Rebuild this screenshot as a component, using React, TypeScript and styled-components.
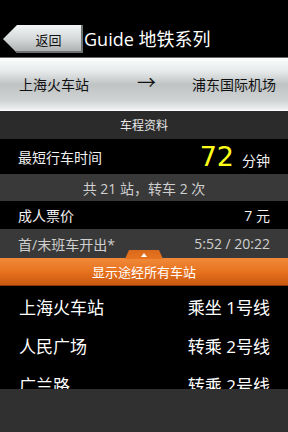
import styled, { createGlobalStyle } from "styled-components";

const GlobalStyle = createGlobalStyle`
  html, body {
    margin: 0;
    padding: 0;
    background: #000;
  }
  * {
    box-sizing: border-box;
  }
`;

const FONT = `"Open Sans", "Noto Sans CJK SC", sans-serif`;

const Screen = styled.div`
  width: 288px;
  height: 432px;
  background: #000;
  display: flex;
  flex-direction: column;
  overflow: hidden;
  font-family: ${FONT};
  color: #f2f2f2;
`;

const Header = styled.div`
  height: 58px;
  display: flex;
  align-items: flex-end;
  padding: 0 0 4px 3px;
  gap: 1px;
  border-bottom: 1px solid #6a6a6a;
`;

const BackButton = styled.button`
  width: 80px;
  height: 28px;
  border: none;
  padding: 0 0 0 11px;
  font-family: ${FONT};
  font-size: 13px;
  color: #111;
  background: linear-gradient(to bottom, #f4f6f6 0%, #d4d8d8 50%, #a8acac 100%);
  clip-path: polygon(0 50%, 14px 0, 100% 0, 100% 100%, 14px 100%);
  box-shadow: inset -2px -2px 0 #6e7272;
  display: flex;
  align-items: center;
  justify-content: center;
`;

const Title = styled.div`
  font-size: 18px;
  line-height: 28px;
  color: #fff;
`;

const RouteBar = styled.div`
  height: 53px;
  display: flex;
  align-items: center;
  justify-content: space-between;
  padding: 0 12px 2px 19px;
  background: linear-gradient(
    to bottom,
    #fbfdfd 0%,
    #e6eaea 25%,
    #bfc3c3 50%,
    #cfd3d3 80%,
    #eceeee 96%,
    #ffffff 100%
  );
  color: #111;
  font-size: 14px;
`;

const Arrow = styled.span`
  font-size: 19px;
  line-height: 1;
  margin-left: 12px;
`;

const SectionTitle = styled.div`
  height: 28px;
  background: #2b2b2b;
  display: flex;
  align-items: center;
  justify-content: center;
  font-size: 12px;
  color: #e8e8e8;
`;

const InfoRow = styled.div<{ $shade?: boolean; $h: number; $center?: boolean }>`
  height: ${(p) => p.$h}px;
  background: ${(p) => (p.$shade ? "#393939" : "#000")};
  color: ${(p) => (p.$shade ? "#cfcfcf" : "#f2f2f2")};
  display: flex;
  align-items: center;
  justify-content: ${(p) => (p.$center ? "center" : "space-between")};
  padding: 0 18px 0 18px;
  font-size: 14px;
`;

const Value = styled.span`
  display: flex;
  align-items: baseline;
  gap: 8px;
`;

const BigNumber = styled.span`
  font-size: 27px;
  line-height: 1;
  color: #ffff1a;
  font-family: "DejaVu Sans", ${FONT};
`;

const OrangeBar = styled.div`
  position: relative;
  height: 28px;
  background: linear-gradient(to bottom, #f08a3a 0%, #e8731f 50%, #c9580e 100%);
  display: flex;
  align-items: center;
  justify-content: center;
  font-size: 13px;
  color: #fff;
  border-bottom: 1px solid #8a3a08;
`;

const PullTab = styled.div`
  position: absolute;
  left: 125px;
  top: -8px;
  width: 38px;
  height: 9px;
  background: linear-gradient(to bottom, #d86a1c, #e8731f);
  clip-path: polygon(4px 0, 34px 0, 100% 100%, 0 100%);
  display: flex;
  justify-content: center;
  padding-top: 3px;

  &::after {
    content: "";
    width: 0;
    height: 0;
    border-left: 3px solid transparent;
    border-right: 3px solid transparent;
    border-bottom: 4px solid #fff;
  }
`;

const StationList = styled.div`
  flex: 1;
  overflow: hidden;
  padding-top: 1px;
`;

const StationRow = styled.div`
  height: 39px;
  display: flex;
  align-items: center;
  justify-content: space-between;
  padding: 0 18px 0 19px;
  font-size: 17px;
  color: #fff;
`;

const BottomBar = styled.div`
  height: 43px;
  background: #303030;
`;

const stations = [
  ["上海火车站", "乘坐 1号线"],
  ["人民广场", "转乘 2号线"],
  ["广兰路", "转乘 2号线"],
];

export default function App() {
  return (
    <>
      <GlobalStyle />
      <Screen>
        <Header>
          <BackButton>返回</BackButton>
          <Title>Guide 地铁系列</Title>
        </Header>
        <RouteBar>
          <span>上海火车站</span>
          <Arrow>→</Arrow>
          <span>浦东国际机场</span>
        </RouteBar>
        <SectionTitle>车程资料</SectionTitle>
        <InfoRow $h={35}>
          <span>最短行车时间</span>
          <Value>
            <BigNumber>72</BigNumber>
            <span>分钟</span>
          </Value>
        </InfoRow>
        <InfoRow $h={27} $shade $center>
          共 21 站，转车 2 次
        </InfoRow>
        <InfoRow $h={28}>
          <span>成人票价</span>
          <span>7 元</span>
        </InfoRow>
        <InfoRow $h={29} $shade>
          <span>首/末班车开出*</span>
          <span>5:52 / 20:22</span>
        </InfoRow>
        <OrangeBar>
          <PullTab />
          显示途经所有车站
        </OrangeBar>
        <StationList>
          {stations.map(([name, line]) => (
            <StationRow key={name}>
              <span>{name}</span>
              <span>{line}</span>
            </StationRow>
          ))}
        </StationList>
        <BottomBar />
      </Screen>
    </>
  );
}
